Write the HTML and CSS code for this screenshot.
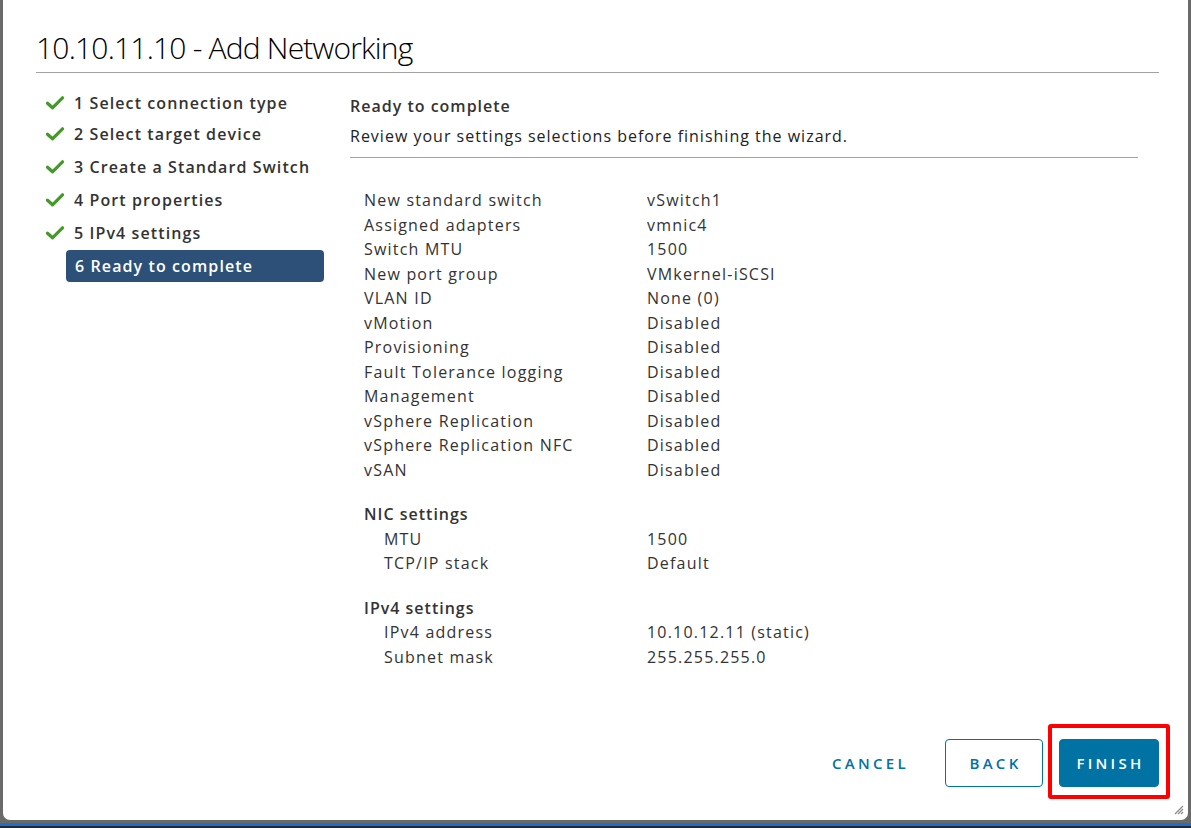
FILE: index.html
```html
<!DOCTYPE html>
<html lang="en">
<head>
<meta charset="utf-8">
<title>Add Networking</title>
<link rel="stylesheet" href="styles.css">
</head>
<body>
<div class="modal">
  <header class="modal-header">
    <h1 class="modal-title">10.10.11.10 - Add Networking</h1>
  </header>
  <div class="modal-body">
    <nav class="steps">
      <div class="step done"><span class="check"><svg width="18" height="14" viewBox="0 0 18 14"><path d="M1.5 7.2 L6.5 11.8 L16.5 1.8" fill="none" stroke="#45992a" stroke-width="3.2" stroke-linecap="round" stroke-linejoin="round"/></svg></span><span class="step-label">1 Select connection type</span></div>
      <div class="step done"><span class="check"><svg width="18" height="14" viewBox="0 0 18 14"><path d="M1.5 7.2 L6.5 11.8 L16.5 1.8" fill="none" stroke="#45992a" stroke-width="3.2" stroke-linecap="round" stroke-linejoin="round"/></svg></span><span class="step-label">2 Select target device</span></div>
      <div class="step done"><span class="check"><svg width="18" height="14" viewBox="0 0 18 14"><path d="M1.5 7.2 L6.5 11.8 L16.5 1.8" fill="none" stroke="#45992a" stroke-width="3.2" stroke-linecap="round" stroke-linejoin="round"/></svg></span><span class="step-label">3 Create a Standard Switch</span></div>
      <div class="step done"><span class="check"><svg width="18" height="14" viewBox="0 0 18 14"><path d="M1.5 7.2 L6.5 11.8 L16.5 1.8" fill="none" stroke="#45992a" stroke-width="3.2" stroke-linecap="round" stroke-linejoin="round"/></svg></span><span class="step-label">4 Port properties</span></div>
      <div class="step done"><span class="check"><svg width="18" height="14" viewBox="0 0 18 14"><path d="M1.5 7.2 L6.5 11.8 L16.5 1.8" fill="none" stroke="#45992a" stroke-width="3.2" stroke-linecap="round" stroke-linejoin="round"/></svg></span><span class="step-label">5 IPv4 settings</span></div>
      <div class="step active"><span class="check"></span><span class="step-label">6 Ready to complete</span></div>
    </nav>
    <section class="content">
      <div class="content-head">
        <h2 class="content-title">Ready to complete</h2>
        <p class="content-desc">Review your settings selections before finishing the wizard.</p>
      </div>
      <div class="summary">
        <div class="row"><span class="k">New standard switch</span><span class="v">vSwitch1</span></div>
        <div class="row"><span class="k">Assigned adapters</span><span class="v">vmnic4</span></div>
        <div class="row"><span class="k">Switch MTU</span><span class="v">1500</span></div>
        <div class="row"><span class="k">New port group</span><span class="v">VMkernel-iSCSI</span></div>
        <div class="row"><span class="k">VLAN ID</span><span class="v">None (0)</span></div>
        <div class="row"><span class="k">vMotion</span><span class="v">Disabled</span></div>
        <div class="row"><span class="k">Provisioning</span><span class="v">Disabled</span></div>
        <div class="row"><span class="k">Fault Tolerance logging</span><span class="v">Disabled</span></div>
        <div class="row"><span class="k">Management</span><span class="v">Disabled</span></div>
        <div class="row"><span class="k">vSphere Replication</span><span class="v">Disabled</span></div>
        <div class="row"><span class="k">vSphere Replication NFC</span><span class="v">Disabled</span></div>
        <div class="row"><span class="k">vSAN</span><span class="v">Disabled</span></div>

        <div class="group-title">NIC settings</div>
        <div class="row sub"><span class="k">MTU</span><span class="v">1500</span></div>
        <div class="row sub"><span class="k">TCP/IP stack</span><span class="v">Default</span></div>

        <div class="group-title">IPv4 settings</div>
        <div class="row sub"><span class="k">IPv4 address</span><span class="v">10.10.12.11 (static)</span></div>
        <div class="row sub"><span class="k">Subnet mask</span><span class="v">255.255.255.0</span></div>
      </div>
    </section>
  </div>
  <footer class="modal-footer">
    <button class="btn btn-link">CANCEL</button>
    <button class="btn btn-outline">BACK</button>
    <span class="highlight"><button class="btn btn-primary">FINISH</button></span>
  </footer>
  <svg class="grip" width="10" height="10" viewBox="0 0 10 10"><path d="M9 1 L1 9 M9 4 L4 9 M9 7 L7 9" stroke="#8a8a8a" stroke-width="1.2"/></svg>
</div>
<div class="taskbar"></div>
</body>
</html>
```
FILE: styles.css
```css
* { box-sizing: border-box; }
html, body { margin: 0; padding: 0; }
body {
  width: 1191px;
  height: 828px;
  overflow: hidden;
  background: #6a6a6a;
  font-family: "Open Sans", "Noto Sans", sans-serif;
  color: #333;
  display: flex;
  flex-direction: column;
  letter-spacing: 1px;
}
.modal {
  position: relative;
  height: 820px;
  margin: 0 3px 0 3px;
  background: #fff;
  border-radius: 0 0 7px 7px;
  display: flex;
  flex-direction: column;
  padding: 0 29px 0 33px;
}
.modal-header {
  padding-top: 30px;
  border-bottom: 1px solid #a3a3a3;
  height: 73px;
}
.modal-title {
  margin: 0;
  font-size: 30px;
  font-weight: 300;
  line-height: 36px;
  color: #000;
  letter-spacing: -0.8px;
}
.modal-body {
  flex: 1;
  display: flex;
  gap: 26px;
}
.steps {
  width: 288px;
  padding-top: 14px;
  display: flex;
  flex-direction: column;
}
.step {
  display: flex;
  align-items: center;
  height: 32.8px;
}
.step:first-child { height: 31px; }
.check {
  width: 30px;
  padding-left: 10px;
  display: flex;
  align-items: center;
}
.step-label {
  flex: 1;
  height: 32px;
  display: flex;
  align-items: center;
  padding-left: 8px;
  font-size: 16px;
  font-weight: 600;
  color: #333;
  border-radius: 4px;
  letter-spacing: 1.1px;
}
.step.active .step-label {
  background: #2d5079;
  color: #fff;
  padding-left: 9px;
}
.content {
  flex: 1;
  padding-right: 21px;
  display: flex;
  flex-direction: column;
}
.content-head {
  padding-top: 22px;
  border-bottom: 1px solid #a3a3a3;
  height: 85px;
}
.content-title {
  margin: 0;
  font-size: 16px;
  font-weight: 600;
  line-height: 22px;
  color: #333;
}
.content-desc {
  margin: 8px 0 0;
  font-size: 16px;
  line-height: 22px;
  color: #222;
}
.summary {
  padding: 30px 0 0 14px;
  font-size: 16px;
  letter-spacing: 1.2px;
}
.row {
  display: flex;
  height: 24.5px;
  align-items: center;
}
.row .k {
  width: 283px;
  color: #333;
}
.row .v { color: #333; }
.row.sub .k {
  padding-left: 20px;
}
.group-title {
  margin-top: 20px;
  height: 24.5px;
  display: flex;
  align-items: center;
  font-weight: 600;
  color: #333;
  letter-spacing: 1px;
}
.modal-footer {
  display: flex;
  justify-content: flex-end;
  align-items: center;
  gap: 16px;
  padding-bottom: 33px;
}
.btn {
  height: 48px;
  font-family: inherit;
  font-size: 15px;
  font-weight: 600;
  letter-spacing: 3.3px;
  border-radius: 4px;
  cursor: pointer;
  padding: 0 0 0 3px;
}
.btn-link {
  width: 116px;
  background: none;
  border: none;
  color: #0072a3;
  margin-right: 2px;
}
.btn-outline {
  width: 98px;
  background: #fff;
  border: 1px solid #0072a3;
  color: #0072a3;
}
.btn-primary {
  width: 100px;
  background: #0072a3;
  border: 1px solid #0072a3;
  color: #fff;
}
.highlight {
  position: relative;
  display: flex;
}
.highlight::after {
  content: "";
  position: absolute;
  left: -11px;
  right: -11px;
  top: -15px;
  bottom: -12px;
  border: 4px solid #ff0000;
  border-radius: 3px;
  pointer-events: none;
}
.grip {
  position: absolute;
  right: 4px;
  bottom: 5px;
}
.taskbar {
  flex: 1;
  border-top: 3px solid #1e6fc8;
  background: #222a33;
  margin-top: 3px;
}
```
